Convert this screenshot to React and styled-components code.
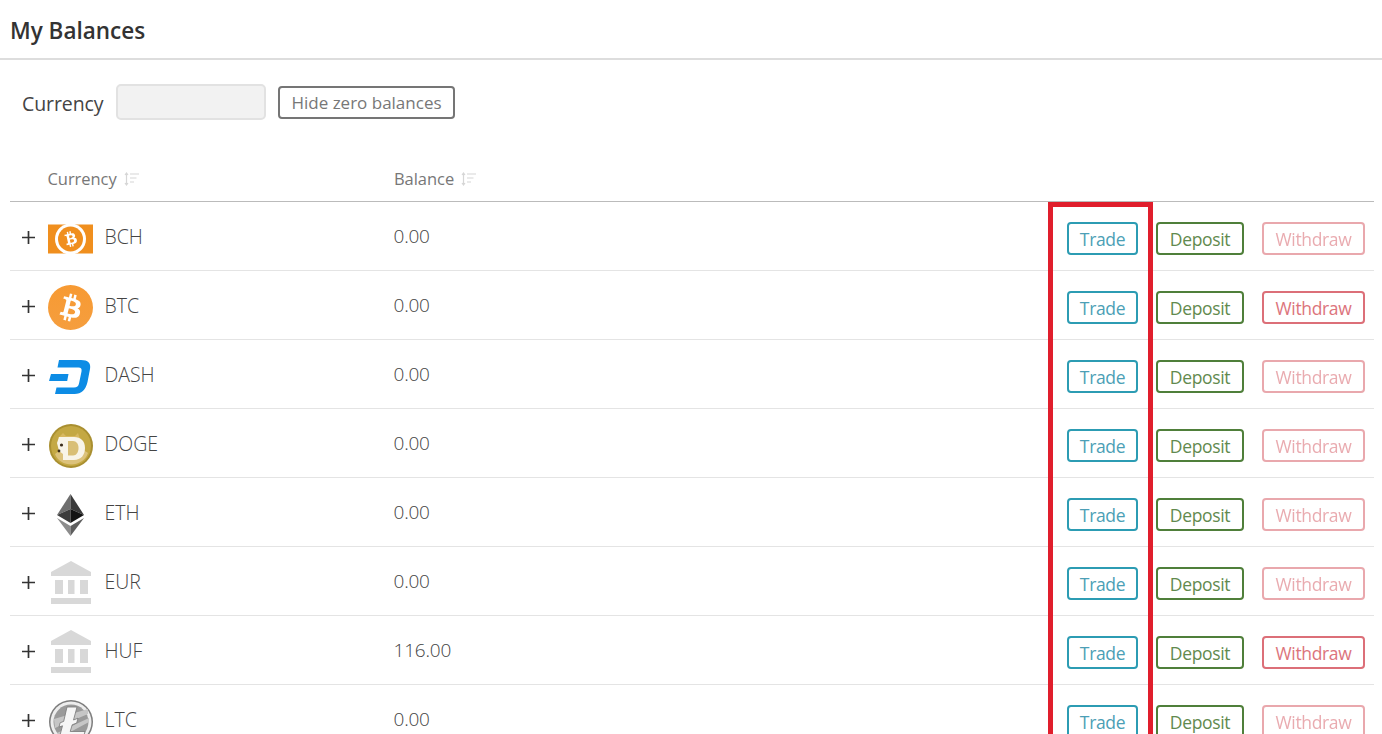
import React from "react";
import styled, { createGlobalStyle } from "styled-components";

const GlobalStyle = createGlobalStyle`
  html, body {
    margin: 0;
    padding: 0;
    background: #fff;
    font-family: "Open Sans", "Noto Sans", sans-serif;
    color: #333;
  }
`;

const Page = styled.div`
  position: relative;
  height: 734px;
  overflow: hidden;
`;
const Header = styled.div`
  height: 58px;
  padding-left: 10px;
  display: flex;
  align-items: center;
  border-bottom: 2px solid #ddd;
`;
const Title = styled.h1`
  margin: 3px 0 0;
  font-size: 22.5px;
  font-weight: 600;
  color: #333;
  letter-spacing: 0;
`;
const Filters = styled.div`
  height: 84px;
  padding: 0 0 0 22px;
  display: flex;
  align-items: center;
`;
const FilterLabel = styled.label`
  width: 94px;
  flex: none;
  font-size: 19.5px;
  color: #444;
  letter-spacing: -0.1px;
  margin-top: 2px;
`;
const FilterInput = styled.input`
  width: 150px;
  height: 36px;
  box-sizing: border-box;
  background: #f2f2f2;
  border: 2px solid #e2e2e2;
  border-radius: 5px;
  margin-right: 12px;
`;
const HideButton = styled.button`
  width: 177px;
  height: 33px;
  background: #fff;
  border: 2px solid #757575;
  border-radius: 4px;
  color: #777;
  font: inherit;
  font-size: 17px;
  padding: 0;
`;
const Table = styled.div`
  margin: 0 8px 0 10px;
`;
const HeadRow = styled.div`
  display: grid;
  grid-template-columns: 346.5px 1fr;
  height: 58px;
  padding-left: 37.5px;
  box-sizing: border-box;
  padding-top: 23px;
  border-bottom: 1px solid #bbb;
`;
const HeadCell = styled.div`
  display: flex;
  align-items: flex-start;
  gap: 7px;
  font-size: 16.5px;
  line-height: 24px;
  color: #777;
  letter-spacing: -0.05px;
`;
const Row = styled.div`
  display: flex;
  align-items: center;
  height: 69px;
  box-sizing: border-box;
  border-bottom: 1px solid #e4e4e4;
`;
const Expand = styled.span`
  width: 37.5px;
  padding-left: 12px;
  margin-top: 2px;
  box-sizing: border-box;
  flex: none;
  display: flex;
`;
const IconBox = styled.span`
  width: 46px;
  height: 46px;
  margin-right: 11px;
  flex: none;
  display: flex;
  align-items: center;
  justify-content: center;
  margin-top: 5px;
`;
const Name = styled.span`
  width: 289px;
  font-size: 19.5px;
  font-weight: 300;
  color: #444;
  letter-spacing: 0;
`;
const Balance = styled.span`
  flex: 1;
  font-size: 19px;
  font-weight: 300;
  color: #444;
  letter-spacing: -0.2px;
`;
const Actions = styled.div`
  display: flex;
  gap: 18px;
  margin-right: 9px;
  margin-top: 5px;
`;
const Action = styled.button`
  height: 33px;
  width: ${(p) => p.$width}px;
  box-sizing: border-box;
  padding: 0;
  background: #fff;
  border: 2px solid ${(p) => p.$color};
  border-radius: 4px;
  color: ${(p) => p.$text};
  opacity: ${(p) => (p.disabled ? 0.6 : 1)};
  font: inherit;
  font-size: 17.5px;
  letter-spacing: -0.35px;
`;
const Highlight = styled.div`
  position: absolute;
  left: 1048px;
  top: 202px;
  width: 105px;
  height: 560px;
  box-sizing: border-box;
  border: 5px solid #e01e2c;
`;
const BankSvg = styled.svg`
  filter: blur(0.5px);
`;

const BTC_B =
  "M23.189 14.02c.314-2.096-1.283-3.223-3.465-3.975l.708-2.84-1.728-.43-.69 2.765c-.454-.114-.92-.22-1.385-.326l.695-2.783L15.596 6l-.708 2.839c-.376-.086-.746-.17-1.104-.26l.002-.009-2.384-.595-.46 1.846s1.283.294 1.256.312c.7.175.826.638.805 1.006l-.806 3.235c.048.012.11.03.18.057l-.183-.045-1.13 4.532c-.086.212-.303.531-.793.41.018.025-1.256-.313-1.256-.313l-.858 1.998 2.25.561c.418.105.828.215 1.231.318l-.715 2.872 1.727.43.708-2.84c.472.127.93.245 1.378.357l-.706 2.828 1.728.43.715-2.866c2.948.558 5.164.333 6.097-2.333.752-2.146-.037-3.385-1.588-4.192 1.13-.26 1.98-1.003 2.207-2.538zm-3.95 5.538c-.533 2.147-4.148.986-5.32.695l.95-3.805c1.172.293 4.929.872 4.37 3.11zm.535-5.569c-.487 1.953-3.495.96-4.47.717l.86-3.45c.975.243 4.118.696 3.61 2.733z";

function BchIcon() {
  return (
    <svg width="45" height="30" viewBox="0 0 45 30">
      <rect width="45" height="29" y="0.5" fill="#f08f1e" />
      <circle cx="22.5" cy="15" r="15.5" fill="#fff" />
      <circle cx="22.5" cy="15" r="12.5" fill="#f08f1e" />
      <g transform="translate(22.5 15) rotate(-26) scale(0.8) translate(-16 -16)">
        <path d={BTC_B} fill="#fff" />
      </g>
    </svg>
  );
}

function BtcIcon() {
  return (
    <svg width="45" height="45" viewBox="0 0 32 32">
      <defs>
        <linearGradient id="btcFill" x1="0" y1="0" x2="0" y2="1">
          <stop offset="0" stopColor="#f79a33" />
          <stop offset="1" stopColor="#f59e3e" />
        </linearGradient>
      </defs>
      <circle cx="16" cy="16" r="16" fill="url(#btcFill)" />
      <path d={BTC_B} fill="#fff" />
    </svg>
  );
}

function DashIcon() {
  return (
    <svg width="43" height="34" viewBox="0 0 43 34">
      <path
        d="M10 0H32c7 0 10 3 9 9l-2.500 13c-1.800 8-6 12-13 12H6l1.500-6.500H25c3 0 4.500-1.500 5-4l2.500-12c.5-2.500-.5-4-3-4H8.500z"
        fill="#0d8ce5"
      />
      <path d="M2 14h17.500l-1.300 7H0z" fill="#0d8ce5" />
    </svg>
  );
}

function DogeIcon() {
  return (
    <svg width="44" height="44" viewBox="0 0 44 44">
      <circle cx="22" cy="22" r="22" fill="#a98f30" />
      <circle cx="22" cy="22" r="20" fill="#c4a843" />
      <path d="M6 30c6-6 26-7 33-1-5 15-28 15-33 1z" fill="#dcc27b" />
      <path d="M9 14l5-5 3 3h9l3-3 2 6z" fill="#d8b860" />
      <path
        d="M10 13h15c7 0 11 4 11 11s-4 12-11 12H14v-6l-4-3-2-8z"
        fill="#f8f4e8"
      />
      <path d="M19 17h5c3.500 0 5.500 3 5.500 7s-2 7.500-5.500 7.500h-5z" fill="#d9bf76" />
      <circle cx="12.500" cy="21" r="1.600" fill="#3b2c1a" />
      <circle cx="10" cy="27" r="1.400" fill="#3b2c1a" />
    </svg>
  );
}

function EthIcon() {
  return (
    <svg width="27" height="42" viewBox="0 0 27 42">
      <polygon points="13.500,0 0,21 13.500,15" fill="#6e6e6e" />
      <polygon points="13.500,0 27,21 13.500,15" fill="#3a3a3a" />
      <polygon points="0,21 13.500,15 13.500,29" fill="#3c3c3c" />
      <polygon points="27,21 13.500,15 13.500,29" fill="#141414" />
      <polygon points="0,24 13.500,32 13.500,42" fill="#8c8c8c" />
      <polygon points="27,24 13.500,32 13.500,42" fill="#5e5e5e" />
    </svg>
  );
}

function BankIcon() {
  return (
    <BankSvg width="40" height="45" viewBox="0 0 40 45">
      <path d="M20 0 40 11v4H0v-4z" fill="#d8d8d8" />
      <rect x="4" y="19" width="8" height="14" fill="#d8d8d8" />
      <rect x="17" y="19" width="6.500" height="14" fill="#d8d8d8" />
      <rect x="29" y="19" width="8" height="14" fill="#d8d8d8" />
      <rect x="0" y="37" width="40" height="6" fill="#d8d8d8" />
    </BankSvg>
  );
}

function LtcIcon() {
  return (
    <svg width="46" height="46" viewBox="0 0 46 46">
      <circle cx="23" cy="23" r="22" fill="#7d7d7d" />
      <circle cx="23" cy="23" r="20.500" fill="#ededed" />
      <circle cx="23" cy="23" r="17.500" fill="#9a9a9a" />
      <path d="M6 20 40 10v5L7 29zM9 34l32-15v4L13 38z" fill="#c6c6c6" />
      <path
        d="M19 8h10l-3.500 13 4.500-1.800-1.300 4.800-4.500 1.800-2 6.700H37l-1.500 5.500H11.500l3-11.200-3.500 1.300 1.100-4.300 3.600-1.400z"
        fill="#f6f6f6"
        stroke="#777"
        strokeWidth="0.8"
      />
    </svg>
  );
}

const rows = [
  { code: "BCH", icon: BchIcon, balance: "0.00" },
  { code: "BTC", icon: BtcIcon, balance: "0.00", canWithdraw: true },
  { code: "DASH", icon: DashIcon, balance: "0.00" },
  { code: "DOGE", icon: DogeIcon, balance: "0.00" },
  { code: "ETH", icon: EthIcon, balance: "0.00" },
  { code: "EUR", icon: BankIcon, balance: "0.00" },
  { code: "HUF", icon: BankIcon, balance: "116.00", canWithdraw: true },
  { code: "LTC", icon: LtcIcon, balance: "0.00" },
];

function SortIcon() {
  return (
    <svg width="15" height="14" viewBox="0 0 15 14" style={{ marginTop: 5 }}>
      <path
        d="M2.500 1v12M1 3l1.500-2L4 3M1 11l1.500 2L4 11M6 2h9M6 6h6.500M6 10h4"
        stroke="#d6d6d6"
        strokeWidth="1.200"
        fill="none"
      />
    </svg>
  );
}

function PlusIcon() {
  return (
    <svg width="13" height="13" viewBox="0 0 13 13">
      <path d="M6.500 0v13M0 6.500h13" stroke="#333" strokeWidth="1.700" />
    </svg>
  );
}

export default function App() {
  return (
    <Page>
      <GlobalStyle />
      <Header>
        <Title>My Balances</Title>
      </Header>
      <Filters>
        <FilterLabel>Currency</FilterLabel>
        <FilterInput disabled />
        <HideButton>Hide zero balances</HideButton>
      </Filters>
      <Table>
        <HeadRow>
          <HeadCell>
            Currency <SortIcon />
          </HeadCell>
          <HeadCell>
            Balance <SortIcon />
          </HeadCell>
        </HeadRow>
        {rows.map((row) => {
          const Icon = row.icon;
          return (
            <Row key={row.code}>
              <Expand>
                <PlusIcon />
              </Expand>
              <IconBox>
                <Icon />
              </IconBox>
              <Name>{row.code}</Name>
              <Balance>{row.balance}</Balance>
              <Actions>
                <Action $width={71} $color="#2c9cb3" $text="#4c9fb6">
                  Trade
                </Action>
                <Action $width={88} $color="#4f7f3a" $text="#628a4e">
                  Deposit
                </Action>
                <Action
                  $width={103}
                  $color="#dc6f78"
                  $text="#dc747c"
                  disabled={!row.canWithdraw}
                >
                  Withdraw
                </Action>
              </Actions>
            </Row>
          );
        })}
      </Table>
      <Highlight />
    </Page>
  );
}
